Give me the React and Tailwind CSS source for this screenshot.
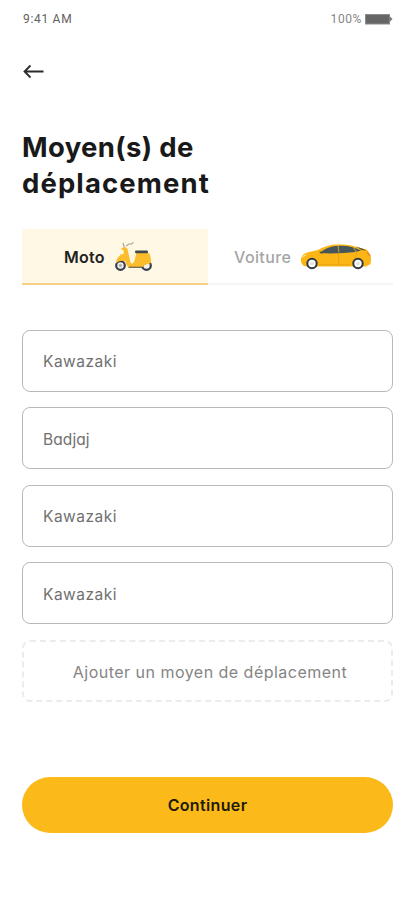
import { useState } from 'react'
import clsx from 'clsx'

const vehicles = [
  { name: 'Kawazaki' },
  { name: 'Badjaj', roundA: true },
  { name: 'Kawazaki' },
  { name: 'Kawazaki' },
]

function StatusBar() {
  return (
    <div className="flex h-[38px] items-center justify-between font-[Roboto,sans-serif] text-xs text-[#606060]">
      <span className="pl-px tracking-[0.7px]">9:41 AM</span>
      <div className="flex items-center gap-[3px] text-[#858585]">
        <span className="tracking-[0.6px]">100%</span>
        <svg width="28" height="11" viewBox="0 0 28 11">
          <rect x="0.5" y="0.5" width="24" height="9.5" fill="#666" stroke="#8c8c8c" />
          <path d="M24.5 2l3 3-3 3z" fill="#777" />
        </svg>
      </div>
    </div>
  )
}

function BackArrow() {
  return (
    <svg width="22" height="16" viewBox="0 0 22 16" fill="none" stroke="#2b2b2b" strokeWidth="1.8">
      <path d="M21.5 7.5H2.5M8.5 1.5l-6 6 6 6" />
    </svg>
  )
}

function Scooter() {
  return (
    <svg width="40" height="32" viewBox="0 0 40 32" fill="none">
      <circle cx="6.5" cy="24.5" r="4.3" fill="#f4f1e8" stroke="#343f4b" strokeWidth="2.2" />
      <circle cx="32.5" cy="24.5" r="4.3" fill="#f4f1e8" stroke="#343f4b" strokeWidth="2.2" />
      <circle cx="6.5" cy="24.5" r="1.7" fill="#aeb3b5" />
      <path d="M10.5 7L9 2M12 5l3-2h2.5l2-1.5" stroke="#a7a196" strokeWidth="1.1" />
      {/* front shield, footboard and rear body */}
      <path d="M7.500 7.500c2-1.800 5-1.500 6 .5l2.700 12c.4 1.800 1 2.500 2 2.500 2.500 0 3-7 4.300-10.500h12.500c1.800 3 2.300 6.500 1.800 10-2.500 1-6.500 1.500-8.500 4H15c-1.500 0-2.500-1.500-3.500-5.500-4-1.500-7-.5-9.500 2 0-4 2-6.500 4.500-8.500z" fill="#fbbd2c" />
      <path d="M16.300 14.500l5-1.500c-1.200 2.500-1.500 6-2.500 8.500h-1z" fill="#fff5d5" />
      <path d="M14.500 26.300H28" stroke="#6f6040" strokeWidth="1.200" />
      <ellipse cx="8" cy="11" rx="1.900" ry="2.500" fill="#fff7df" />
      <rect x="21" y="9.500" width="13" height="2.800" rx="1.300" fill="#3f474d" />
    </svg>
  )
}

function Car() {
  return (
    <svg width="72" height="28" viewBox="0 0 72 28" fill="none">
      <path d="M1 18c-.5-3 1-6 4-7.500 4-2 8.500-2.500 13-3.500 6-3.500 12-5.500 21-5.500 10 0 16 1.500 22 4l5 .5c3 3 5 6 5 9.500l-.5 5.500-4.500 2.500H9C4 23.500 1.500 22.500 1 18z" fill="#fbb615" />
      <path d="M20 10c4.500-4.500 11.500-6.900 19-7.200 9-.3 15 1.200 22 4.700l-5.500 1.500c-10 1-24 2-35.500 1z" fill="#45575b" />
      <path d="M56 3.500l6 2 4.500 2-5-.5z" fill="#4d5550" />
      <path d="M38 2.500l1 7M53.500 4l2.500 5" stroke="#d6a229" strokeWidth="1" />
      <path d="M38.500 10l.5 12.500M19 21.800h32M57 8c-1 6-3 8-5 12" stroke="#df9a12" strokeWidth=".7" />
      <path d="M19.500 8.500l3.500.5v1.500l-3-.2z" fill="#50563f" />
      <path d="M2 14l4-2" stroke="#ffe08a" strokeWidth="1.300" />
      <path d="M67 9l3 4" stroke="#e88325" strokeWidth="1.300" />
      <circle cx="12" cy="20.5" r="4.700" fill="#fff" stroke="#30393e" strokeWidth="2" />
      <circle cx="58" cy="20.5" r="4.700" fill="#fff" stroke="#30393e" strokeWidth="2" />
      <circle cx="12" cy="20.5" r="1.800" fill="#dfe2e3" />
      <circle cx="58" cy="20.5" r="1.800" fill="#dfe2e3" />
    </svg>
  )
}

export default function App() {
  const [tab, setTab] = useState('moto')

  return (
    <main className="h-[900px] w-[415px] bg-white px-[22px] font-[Inter,sans-serif]">
      <StatusBar />
      <button className="mt-[26px] block h-4" aria-label="Retour">
        <BackArrow />
      </button>

      <h1 className="mt-[50px] text-[27.5px] leading-[35.5px] font-bold text-[#191919]">
        <span className="block tracking-[0.35px]">Moyen(s) de</span>
        <span className="block tracking-[1.1px]">déplacement</span>
      </h1>

      {/* Vehicle type */}
      <div className="mt-7 flex h-14">
        <button
          onClick={() => setTab('moto')}
          className={clsx(
            'flex w-[186px] items-center gap-[9px] border-b-2 pt-0.5 pl-[42px] text-base font-semibold tracking-[0.25px]',
            tab === 'moto' ? 'border-[#f8cf87] bg-[#fff8e5] text-[#222]' : 'border-[#f3f3f3] text-[#a5a5a5]'
          )}
        >
          <span>Moto</span>
          <Scooter />
        </button>
        <button
          onClick={() => setTab('voiture')}
          className={clsx(
            'flex flex-1 items-center gap-[9px] border-b-2 pt-0.5 pl-[26px] text-base font-medium tracking-[0.4px]',
            tab === 'voiture' ? 'border-[#f8cf87] bg-[#fff8e5] text-[#222]' : 'border-[#f5f5f5] text-[#a5a5a5]'
          )}
        >
          <span>Voiture</span>
          <Car />
        </button>
      </div>

      {/* Saved vehicles */}
      <ul className="mt-[45px] space-y-[15.4px]">
        {vehicles.map((v, i) => (
          <li key={i} className="flex h-[62px] items-center rounded-lg border border-[#b9b9b9] pt-0.5 pl-5 text-[15.5px] tracking-[0.5px] text-[#707070]">
            <span className={clsx(v.roundA && "tracking-[0.1px] [font-feature-settings:'cv11']")}>{v.name}</span>
          </li>
        ))}
      </ul>

      <button className="mt-[15.8px] flex h-[62px] w-full items-center justify-center rounded-lg border-2 border-dashed border-[#ececec] pt-0.5 pl-[5px] text-base tracking-[0.48px] text-[#858585]">
        Ajouter un moyen de déplacement
      </button>

      <button className="mt-[75px] flex h-14 w-full items-center justify-center rounded-full bg-[#fbb91a] text-base font-semibold tracking-[0.35px] text-[#201a0c]">
        Continuer
      </button>
    </main>
  )
}
